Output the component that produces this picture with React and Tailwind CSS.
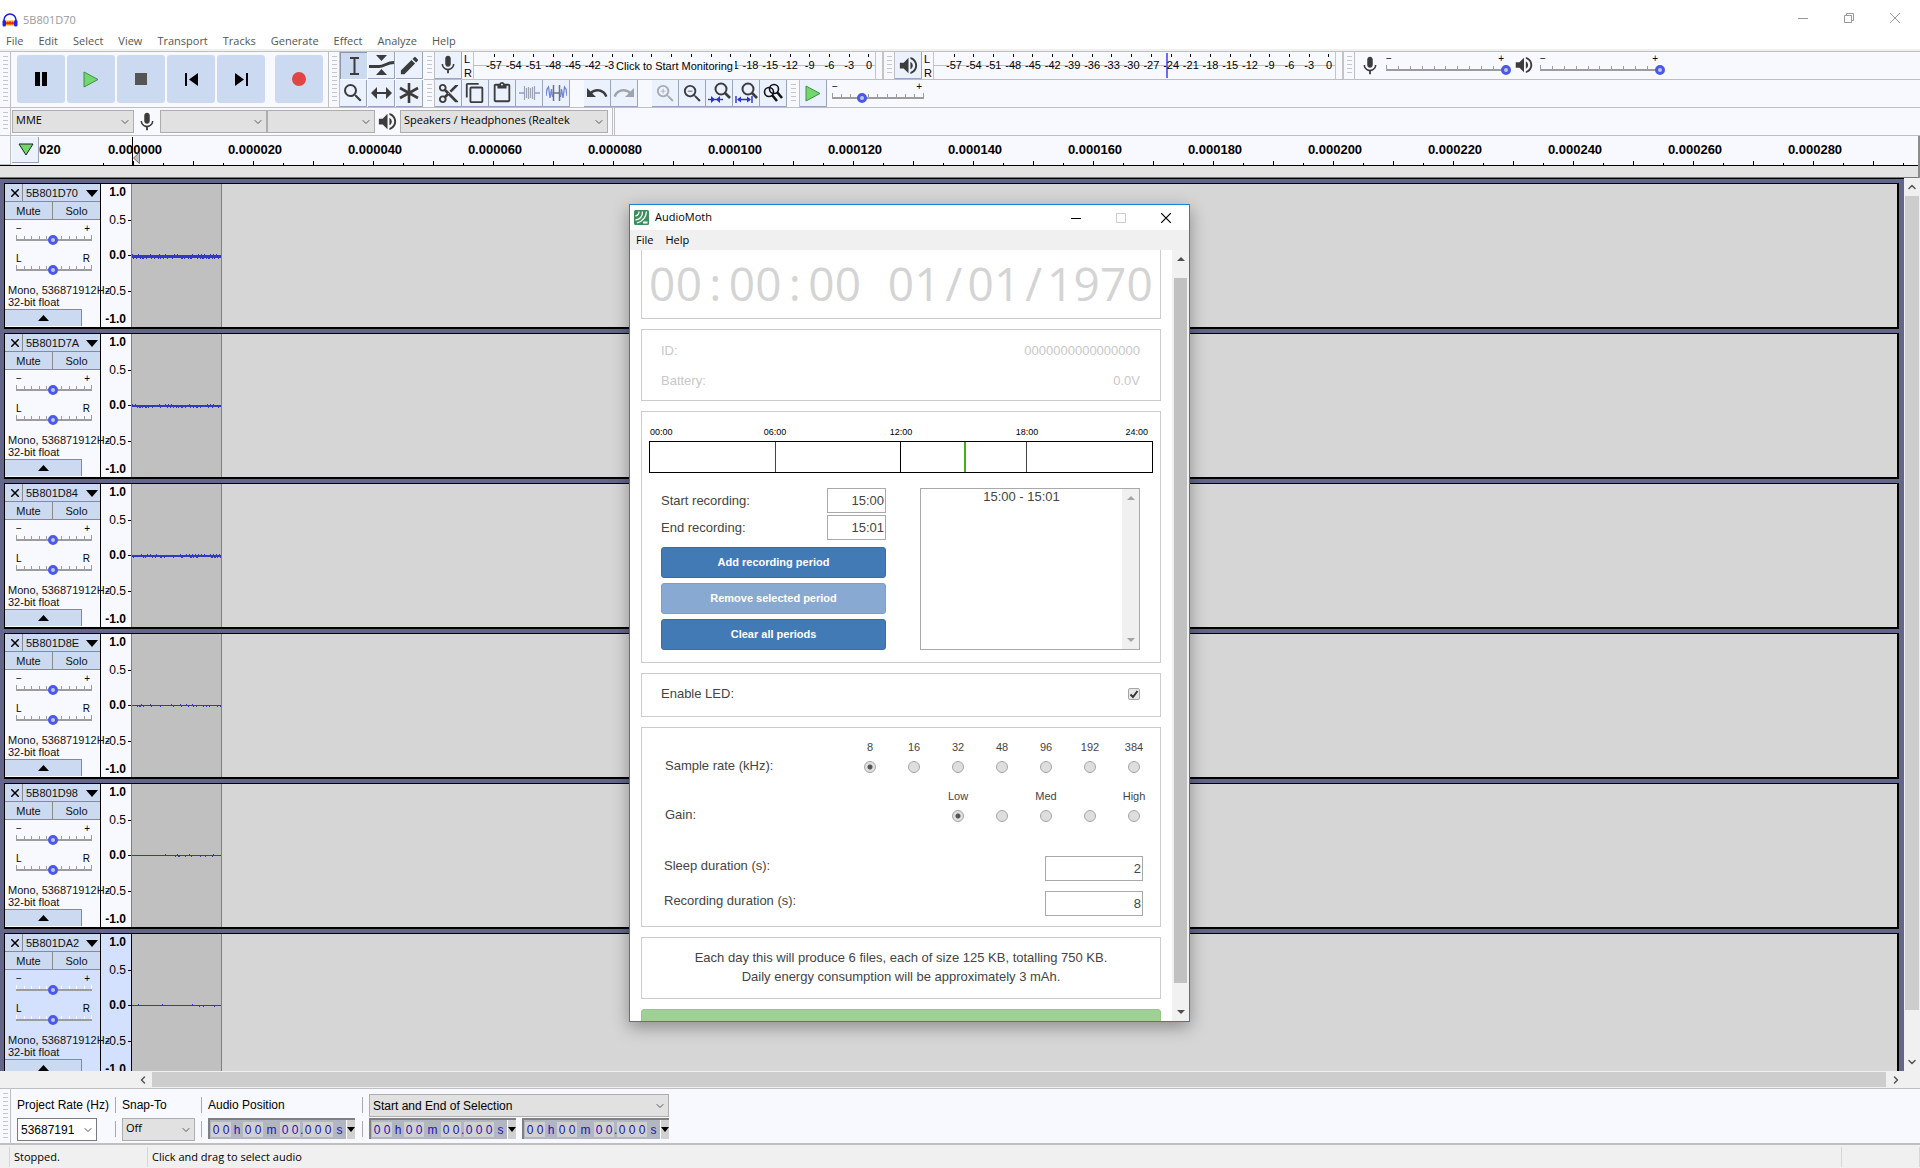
import { ChevronDown, ChevronLeft, ChevronRight, ChevronUp } from 'lucide-react'
import {
  MdContentCopy,
  MdContentCut,
  MdContentPaste,
  MdEdit,
  MdMic,
  MdRedo,
  MdSearch,
  MdUndo,
  MdVolumeUp,
  MdZoomIn,
  MdZoomOut,
} from 'react-icons/md'

const SYSTEM = "font-['Open_Sans','Noto_Sans',sans-serif]"
const ARIAL = "font-['Liberation_Sans',Arial,sans-serif]"

const MENUS = ['File', 'Edit', 'Select', 'View', 'Transport', 'Tracks', 'Generate', 'Effect', 'Analyze', 'Help']

const DB_MARKS = [-57, -54, -51, -48, -45, -42, -39, -36, -33, -30, -27, -24, -21, -18, -15, -12, -9, -6, -3, 0]

const TIME_LABELS = [
  '0.000000', '0.000020', '0.000040', '0.000060', '0.000080', '0.000100', '0.000120', '0.000140',
  '0.000160', '0.000180', '0.000200', '0.000220', '0.000240', '0.000260', '0.000280', '',
]

const TRACKS = [
  { name: '5B801D70', base: 3, noise: 1 },
  { name: '5B801D7A', base: 2, noise: 1 },
  { name: '5B801D84', base: 2, noise: 1 },
  { name: '5B801D8E', base: 1, noise: 0.6 },
  { name: '5B801D98', base: 1, noise: 0.3 },
  { name: '5B801DA2', base: 1, noise: 0.06, selected: true },
]

/* ---------- small shared pieces ---------- */

function Grip({ className = '' }) {
  return (
    <div className={`flex w-[11px] shrink-0 justify-center border-r border-[#bfbfbf] py-1 ${className}`}>
      <div className="w-[5px] bg-[repeating-linear-gradient(to_bottom,#c4c6cc_0,#c4c6cc_1px,transparent_1px,transparent_4px)]" />
    </div>
  )
}

function ToolButton({ label, active, children }) {
  return (
    <button
      aria-label={label}
      className={`flex h-[27px] w-[27px] shrink-0 items-center justify-center text-[#3c3c3c] ${
        active ? 'border-t border-l border-[#8d98ae] bg-[#cbd9f1]' : 'border-r border-b border-[#9aa5bb] bg-[#ebf2fe]'
      }`}
    >
      {children}
    </button>
  )
}

function Slider({ label, value, ticks = 10, minus, plus, light, className = '' }) {
  return (
    <div className={`shrink-0 ${className}`}>
      <div className={`flex justify-between pr-[2px] text-[10px] leading-[12px] text-black ${ARIAL}`}>
        <span>{minus}</span>
        <span>{plus}</span>
      </div>
      <div className="relative">
        <div className="flex h-1 items-end justify-between">
          {Array.from({ length: ticks + 1 }, (_, i) => (
            <span
              key={i}
              className={`w-px ${i === 0 || i === ticks ? 'h-1' : 'h-[3px]'} ${light ? 'bg-white' : 'bg-[#9c9c9c]'}`}
            />
          ))}
        </div>
        <div className="h-[2px] bg-[#9c9c9c]" />
        <input
          type="range"
          aria-label={label}
          defaultValue={value}
          className="absolute -inset-x-[5px] top-0 h-[10px] w-[calc(100%+10px)] appearance-none bg-transparent [&::-webkit-slider-thumb]:h-[10px] [&::-webkit-slider-thumb]:w-[10px] [&::-webkit-slider-thumb]:appearance-none [&::-webkit-slider-thumb]:rounded-full [&::-webkit-slider-thumb]:border-[3px] [&::-webkit-slider-thumb]:border-[#4a58ee] [&::-webkit-slider-thumb]:bg-[#c4c8d8]"
        />
      </div>
    </div>
  )
}

function Dropdown({ label, value, className = '', selectClass = 'border-[#adadad] bg-[#e1e1e1]', arial }) {
  return (
    <div className={`relative h-[23px] shrink-0 ${className}`}>
      <select
        aria-label={label}
        className={`block h-full w-full appearance-none border pr-5 pl-[3px] text-black ${arial ? `text-[12px] ${ARIAL}` : `pb-[2px] text-[11px] ${SYSTEM}`} ${selectClass}`}
      >
        <option>{value}</option>
      </select>
      <ChevronDown size={12} strokeWidth={2} className="pointer-events-none absolute top-[6px] right-[3px] text-[#555]" />
    </div>
  )
}

/* ---------- title and menus ---------- */

function AudacityLogo() {
  return (
    <svg viewBox="0 0 16 14" className="h-[14px] w-4">
      <path d="M4 7.500h8v5H4z" fill="#ffb300" />
      <path d="M4 9.500l1.500-1 1 1 1.500-1.500 1.500 1.500 1-1 1.500 1v1.500l-1.500.5-1.500-.5-1 1-1-1-1.500.5L4 11z" fill="#f22" />
      <path d="M2 9V7a6 6 0 0 1 12 0v2" fill="none" stroke="#2020d8" strokeWidth="1.600" />
      <rect x="0.500" y="7" width="3.500" height="6.500" rx="1.500" fill="#2323e6" />
      <rect x="12" y="7" width="3.500" height="6.500" rx="1.500" fill="#2323e6" />
    </svg>
  )
}

function TitleBar() {
  return (
    <header className="flex h-[31px] items-end bg-white pb-[3px] pl-[2px]">
      <div className="flex flex-1 items-center gap-[5px] text-[11px] leading-4 text-[#999]">
        <AudacityLogo />
        <span>5B801D70</span>
      </div>
      <div className="flex items-center gap-9 pr-5 pb-[5px] text-[#999]">
        <button aria-label="Minimize">
          <svg width="10" height="10"><path d="M0 5.500h10" stroke="currentColor" /></svg>
        </button>
        <button aria-label="Restore">
          <svg width="10" height="10" fill="none" stroke="currentColor"><path d="M.5 2.500h7v7h-7zM2.500 2.500v-2h7v7h-2" /></svg>
        </button>
        <button aria-label="Close">
          <svg width="10" height="10" stroke="currentColor"><path d="M0 0l10 10M10 0L0 10" /></svg>
        </button>
      </div>
    </header>
  )
}

function MenuBar() {
  return (
    <nav className="flex h-[20px] items-end gap-[15px] border-b-2 border-[#f0f0f0] bg-white pl-[6px] text-[11px] leading-4 text-[#555]">
      {MENUS.map((name) => (
        <button key={name}>{name}</button>
      ))}
    </nav>
  )
}

/* ---------- toolbars ---------- */

function BigButton({ label, className = '', children }) {
  return (
    <button aria-label={label} className={`flex h-12 w-12 items-center justify-center rounded-[3px] bg-[#cbd9f1] ${className}`}>
      {children}
    </button>
  )
}

function TransportBar() {
  return (
    <div className="flex shrink-0">
      <Grip />
      <div className="flex gap-[2px] border-r border-[#bfbfbf] pt-[3px] pr-[5px] pl-[6px]">
        <BigButton label="Pause">
          <svg width="12" height="14"><path d="M0 0h5v14H0zM7 0h5v14H7z" /></svg>
        </BigButton>
        <BigButton label="Play">
          <svg width="16" height="17"><path d="M1 1l14 7.500L1 16z" fill="#70d86c" stroke="#3f8f45" /></svg>
        </BigButton>
        <BigButton label="Stop">
          <svg width="12" height="12"><path d="M0 0h12v12H0z" fill="#555" /></svg>
        </BigButton>
        <BigButton label="Skip to Start">
          <svg width="13" height="13"><path d="M0 0h2v13H0zM13 0v13L4 6.500z" /></svg>
        </BigButton>
        <BigButton label="Skip to End">
          <svg width="13" height="13"><path d="M11 0h2v13h-2zM0 0v13l9-6.500z" /></svg>
        </BigButton>
        <BigButton label="Record" className="ml-2">
          <span className="h-[14px] w-[14px] rounded-full bg-[#e24444]" />
        </BigButton>
      </div>
    </div>
  )
}

function ToolsBar() {
  return (
    <div className="flex shrink-0">
      <Grip />
      <div className="grid grid-cols-3 gap-px pr-px">
        <ToolButton label="Selection Tool" active>
          <svg width="9" height="18" fill="none" stroke="currentColor" strokeWidth="2"><path d="M0 1h9M4.500 1v16M0 17h9" /></svg>
        </ToolButton>
        <ToolButton label="Envelope Tool">
          <svg width="25" height="20" viewBox="0 0 25 20">
            <path d="M7 0h11l-5.500 6zM7 20h11l-5.500-6z" fill="currentColor" />
            <path d="M0 11.500h10c5 0 8-4 15-4" fill="none" stroke="currentColor" strokeWidth="3" />
          </svg>
        </ToolButton>
        <ToolButton label="Draw Tool"><MdEdit size={23} /></ToolButton>
        <ToolButton label="Zoom Tool"><MdSearch size={24} /></ToolButton>
        <ToolButton label="Time Shift Tool">
          <svg width="21" height="12" viewBox="0 0 21 12">
            <path d="M0 6l6-6v12zM21 6l-6-6v12z" fill="currentColor" />
            <path d="M4 6h13" stroke="currentColor" strokeWidth="2" />
          </svg>
        </ToolButton>
        <ToolButton label="Multi-Tool">
          <svg width="20" height="20" viewBox="0 0 20 20" stroke="currentColor" strokeWidth="2.600">
            <path d="M10 0v20M1 5l18 10M19 5L1 15" />
          </svg>
        </ToolButton>
      </div>
    </div>
  )
}

function Meter({ level, covered = [], children }) {
  return (
    <>
      <div className={`flex w-[11px] flex-col pl-[2px] text-[11px] leading-[14px] text-black ${ARIAL}`}>
        <span>L</span>
        <span>R</span>
      </div>
      <div className="relative flex w-[403px] flex-col border-x border-[#c4c4c4]">
        <div className="absolute inset-x-0 top-[13px] h-px bg-[#bfbfbf]" />
        {level && <div className="absolute top-[1px] left-[232px] h-[25px] w-[2px] bg-[#6a6aff]" />}
        <div className={`relative flex justify-between pr-[6px] pl-5 text-[11px] leading-[15px] text-black ${ARIAL}`}>
          {DB_MARKS.map((db) => (
            <div key={db} className="flex w-0 flex-col items-center pt-[2px]">
              <span className="h-[3px] w-px bg-black" />
              <span className="pt-px">{covered.includes(db) ? null : db}</span>
            </div>
          ))}
        </div>
        {children}
      </div>
    </>
  )
}

function MeterRow() {
  return (
    <div className="flex h-[28px] border-b border-[#bfbfbf]">
      <Grip />
      <ToolButton label="Record Meter"><MdMic size={22} /></ToolButton>
      <Meter covered={[-36, -33, -30, -27, -24]}>
        <button
          className={`absolute top-[7px] left-[140px] w-[121px] bg-[#f8f9ff] text-center text-[11px] leading-[15px] whitespace-nowrap text-black ${ARIAL}`}
        >
          Click to Start Monitoring
        </button>
      </Meter>
      <div className="w-[8px] border-r-2 border-[#c4c4c4]" />
      <Grip />
      <ToolButton label="Playback Meter"><MdVolumeUp size={23} /></ToolButton>
      <Meter level />
      <div className="w-[8px] border-r-2 border-[#c4c4c4]" />
      <Grip />
      <div className="flex items-start gap-[5px] pl-1 text-[#3c3c3c]">
        <MdMic size={22} className="mt-[3px]" />
        <Slider label="Recording Volume" value={100} minus="−" plus="+" className="w-[120px] pt-px" />
        <MdVolumeUp size={22} className="mt-[2px] ml-[2px]" />
        <Slider label="Playback Volume" value={100} minus="−" plus="+" className="w-[120px] pt-px" />
      </div>
    </div>
  )
}

function WaveIcon({ silence }) {
  return (
    <svg width="21" height="16" viewBox="0 0 21 16" fill="none">
      {silence ? (
        <>
          <path d="M0 11l1-7 1.500-2L4 13l1.500-9 1 8M14.500 12l1-8L17 13l1.500-11L20 4l1 7" stroke="#6f86dc" strokeWidth="1.300" />
          <path d="M7.500 0v16M13.500 0v16M8 8h6" stroke="#6d7180" strokeWidth="1.500" />
        </>
      ) : (
        <>
          <path d="M0 8h5M16 8h5" stroke="#8b9ce0" strokeWidth="1.500" />
          <path d="M5.500 1v14M15.500 1v14M7.500 3v10M9.500 2v12M11.500 3v10M13.500 2v12" stroke="#9ea3b3" strokeWidth="1.200" />
        </>
      )}
    </svg>
  )
}

function ZoomMark({ fit }) {
  return (
    <svg width="23" height="22" viewBox="0 0 23 22" fill="none">
      <circle cx="13" cy="7" r="5.500" stroke="#3c3c3c" strokeWidth="2" />
      <path d="M17 11l5 5" stroke="#3c3c3c" strokeWidth="2.600" />
      {fit ? (
        <>
          <path d="M1 14v7M17 14v7M3 17.500h12" stroke="#2b32c8" strokeWidth="1.400" />
          <path d="M2 17.500l4-3v6zM16 17.500l-4-3v6z" fill="#2b32c8" />
        </>
      ) : (
        <>
          <path d="M0 17.500h15" stroke="#2b32c8" strokeWidth="1.400" />
          <path d="M7 17.500l-4-3.500v7zM8 17.500l4-3.500v7z" fill="#2b32c8" />
        </>
      )}
    </svg>
  )
}

function EditRow() {
  return (
    <div className="flex h-[27px]">
      <Grip />
      <ToolButton label="Cut"><MdContentCut size={23} /></ToolButton>
      <ToolButton label="Copy"><MdContentCopy size={22} /></ToolButton>
      <ToolButton label="Paste"><MdContentPaste size={22} /></ToolButton>
      <ToolButton label="Trim"><WaveIcon /></ToolButton>
      <ToolButton label="Silence"><WaveIcon silence /></ToolButton>
      <div className="w-[14px]" />
      <ToolButton label="Undo"><MdUndo size={24} /></ToolButton>
      <ToolButton label="Redo"><MdRedo size={24} className="text-[#a0a3aa]" /></ToolButton>
      <div className="w-[14px]" />
      <ToolButton label="Zoom In"><MdZoomIn size={23} className="text-[#a8abb2]" /></ToolButton>
      <ToolButton label="Zoom Out"><MdZoomOut size={23} /></ToolButton>
      <ToolButton label="Fit Selection"><ZoomMark /></ToolButton>
      <ToolButton label="Fit Project"><ZoomMark fit /></ToolButton>
      <ToolButton label="Zoom Toggle">
        <svg width="20" height="20" viewBox="0 0 20 20" fill="none" stroke="#111" strokeWidth="1.600">
          <circle cx="6" cy="9" r="4.500" />
          <circle cx="11" cy="6" r="4.500" />
          <path d="M9 12l5 6M14 9l5 6" strokeWidth="2.600" />
        </svg>
      </ToolButton>
      <Grip className="w-[13px]" />
      <ToolButton label="Play at Speed">
        <svg width="16" height="17"><path d="M1 1l14 7.500L1 16z" fill="#70d86c" stroke="#3f8f45" /></svg>
      </ToolButton>
      <Slider label="Playback Speed" value={33} minus="−" plus="+" className="ml-[5px] w-[92px] pt-px" />
    </div>
  )
}

function DeviceRow() {
  return (
    <div className="flex h-[28px] border-b border-[#bfbfbf]">
      <Grip />
      <div className="flex items-center pl-px text-[#3c3c3c]">
        <Dropdown label="Audio Host" value="MME" className="w-[122px]" />
        <MdMic size={22} className="mx-[2px]" />
        <Dropdown label="Recording Device" value="" className="w-[107px]" />
        <Dropdown label="Recording Channels" value="" className="w-[108px]" />
        <MdVolumeUp size={23} className="mx-px" />
        <Dropdown label="Playback Device" value="Speakers / Headphones (Realtek" className="w-[208px]" />
      </div>
      <div className="ml-1 w-[3px] border-x border-[#bfbfbf]" />
    </div>
  )
}

function Timeline() {
  return (
    <div className="border-r-2 border-[#8c8c8c]">
      <div className="relative flex h-[30px] overflow-hidden border-b border-black">
        <div className="w-[11px] shrink-0 border-r border-b border-[#bfbfbf]" />
        <button
          aria-label="Pinned Play Head"
          className="mt-px ml-px flex h-[26px] w-[27px] shrink-0 items-center justify-center border-r border-b border-[#9aa5bb] bg-[#ebf2fe] pl-px"
        >
          <svg width="16" height="13"><path d="M1 1h14L8 12z" fill="#70d86c" stroke="#222" /></svg>
        </button>
        <div className={`w-[36px] shrink-0 pt-[6px] text-[13px] leading-4 font-bold text-black ${ARIAL}`}>020</div>
        {TIME_LABELS.map((label, i) => (
          <div key={i} className={`flex w-[120px] shrink-0 flex-col justify-between pt-[6px] text-[13px] font-bold text-black ${ARIAL}`}>
            <span className="h-4 text-center leading-4">{label}</span>
            <div className="flex items-end">
              {[0, 1, 2, 3].map((n) => (
                <span key={n} className="flex w-[30px] justify-end pr-px">
                  <i className={`w-px bg-black ${n % 2 ? 'h-1' : 'h-[2px]'}`} />
                </span>
              ))}
            </div>
          </div>
        ))}
        <div className="absolute top-px bottom-0 left-[132px] w-px bg-black" />
        <svg className="absolute top-4 left-[133px]" width="7" height="12"><path d="M6.500 .5v11L.5 6z" fill="#c4c4c4" stroke="#777" /></svg>
      </div>
      <div className="h-[12px] border-b border-[#777] bg-[#e3e3e3]" />
    </div>
  )
}

/* ---------- tracks ---------- */

function Waveform({ base, noise, seed }) {
  let s = seed * 7919 + 17
  const bars = []
  for (let x = 0; x < 89; x++) {
    s = (s * 1103515245 + 12345) % 2147483648
    const extra = s / 2147483648 < noise * 0.5 ? 1 : 0
    bars.push(`M${x} ${4 - (extra && x % 3 === 0 ? 1 : 0)}h1v${base + extra}h-1z`)
  }
  return (
    <svg width="89" height="10" className="shrink-0">
      <path d={bars.join('')} fill="#3237c8" />
    </svg>
  )
}

function RulerMark({ children, bold, tick, className = '' }) {
  return (
    <div className={`flex h-4 items-center justify-end gap-[2px] text-[12px] leading-4 text-black ${bold ? 'font-bold' : ''} ${className}`}>
      <span className={tick ? '' : 'pr-[5px]'}>{children}</span>
      {tick && <i className="h-px w-[3px] bg-black" />}
    </div>
  )
}

function Track({ name, base, noise, selected, index }) {
  const tint = selected ? 'bg-[#d3e1ff]' : 'bg-[#f8f9ff]'
  return (
    <section className={`mb-1 flex h-[146px] shrink-0 border-t border-r-2 border-b-2 border-l border-black ${ARIAL}`}>
      <div className={`relative z-10 w-[96px] shrink-0 border-r border-black text-[11px] text-[#111] ${tint}`}>
        <div className="flex h-[18px] border-b border-[#8a8a8a] bg-[#cbd9f1]">
          <button aria-label="Close track" className="flex w-[18px] items-center justify-center border-r border-[#8a8a8a] pt-px pl-[2px]">
            <svg width="8" height="8" stroke="#000" strokeWidth="1.500"><path d="M0 0l8 8M8 0L0 8" /></svg>
          </button>
          <button className="flex flex-1 items-center justify-between pt-[2px] pr-[2px] pl-[3px]">
            {name}
            <svg width="12" height="7"><path d="M0 0h12L6 7z" /></svg>
          </button>
        </div>
        <div className="flex h-[18px] border-b border-[#8a8a8a] bg-[#cbd9f1]">
          <button className="w-[48px] border-r border-[#8a8a8a] pt-px">Mute</button>
          <button className="flex-1 pt-px">Solo</button>
        </div>
        <Slider label={`${name} gain`} value={49} minus="−" plus="+" light={selected} className="mt-[3px] ml-[11px] w-[76px]" />
        <Slider label={`${name} pan`} value={49} minus="L" plus="R" light={selected} className="mt-3 ml-[11px] w-[76px]" />
        <p className="mt-[13px] pl-[3px] leading-[12px] whitespace-nowrap">
          Mono, 536871912Hz
          <br />
          32-bit float
        </p>
        <button
          aria-label="Collapse track"
          className="mt-px flex h-[17px] w-[77px] items-center justify-center border-t border-r border-[#8a8a8a] bg-[#cbd9f1]"
        >
          <svg width="11" height="6"><path d="M0 6h11L5.500 0z" /></svg>
        </button>
      </div>
      <div className={`w-[30px] shrink-0 overflow-hidden ${tint}`}>
        <RulerMark bold>1.0</RulerMark>
        <RulerMark tick className="mt-3">0.5</RulerMark>
        <RulerMark bold tick className="mt-[19px]">0.0</RulerMark>
        <RulerMark tick className="mt-5">-0.5</RulerMark>
        <RulerMark bold className="mt-3">-1.0</RulerMark>
      </div>
      <div className={`flex shrink-0 items-center border-r border-l border-r-[#808080] bg-[#c0c0c0] ${selected ? 'border-l-black' : 'border-l-[#808080]'}`}>
        <Waveform base={base} noise={noise} seed={index + 1} />
      </div>
      <div className="flex-1 bg-[#d6d6d6]" />
    </section>
  )
}

function TrackArea() {
  return (
    <main className="flex min-h-0 flex-1 flex-col">
      <div className="flex min-h-0 flex-1">
        <div className="flex min-w-0 flex-1 flex-col overflow-hidden border-t border-black bg-[#636688] pt-1 pr-[5px] pl-1">
          {TRACKS.map((track, i) => (
            <Track key={track.name} index={i} {...track} />
          ))}
        </div>
        <div className="flex w-4 flex-col items-center bg-[#f0f0f0] text-[#555]">
          <ChevronUp size={12} strokeWidth={3} className="my-[3px]" />
          <div className="w-[14px] flex-1 bg-[#cdcdcd]" />
          <ChevronDown size={12} strokeWidth={3} className="mt-[46px] mb-[3px]" />
        </div>
      </div>
      <div className="flex h-[17px] items-center bg-[#f0f0f0] pr-[18px] pl-[137px] text-[#555]">
        <ChevronLeft size={12} strokeWidth={3} className="mr-[3px]" />
        <div className="h-[15px] flex-1 bg-[#cdcdcd]" />
        <ChevronRight size={12} strokeWidth={3} className="ml-1" />
      </div>
    </main>
  )
}

/* ---------- selection toolbar and status ---------- */

function Digits({ children }) {
  return (
    <span className="flex h-[15px] items-center bg-[#d0d0d0]">
      {children.split('').map((d, i) => (
        <span key={i} className="w-[10px] text-center">{d}</span>
      ))}
    </span>
  )
}

function TimeBox({ label }) {
  return (
    <div
      role="group"
      aria-label={label}
      className={`flex h-[21px] w-[147px] shrink-0 items-center border-t-2 border-l-2 border-[#808080] bg-[#b1b6c2] pl-px text-[12px] text-[#1f12b8] ${ARIAL}`}
    >
      <Digits>00</Digits>
      <span className="w-[12px] text-center">h</span>
      <Digits>00</Digits>
      <span className="w-[17px] text-center">m</span>
      <Digits>00</Digits>
      <span className="w-[3px]">.</span>
      <Digits>000</Digits>
      <span className="flex-1 text-center">s</span>
      <button aria-label={`${label} format`} className="flex h-full w-[9px] items-center justify-center border-l border-white bg-[#d0d0d0]">
        <svg width="8" height="5"><path d="M0 0h8L4 5z" /></svg>
      </button>
    </div>
  )
}

function Divider() {
  return (
    <div className="mx-[6px] flex w-px shrink-0 flex-col gap-2 pt-2">
      <span className="h-4 bg-[#a9a9a9]" />
      <span className="h-4 bg-[#a9a9a9]" />
    </div>
  )
}

function SelectionBar() {
  return (
    <div className={`flex h-[57px] border-t border-b-2 border-[#bfbfbf] bg-[#f8f9ff] text-[12px] whitespace-nowrap text-black ${ARIAL}`}>
      <Grip />
      <div className="ml-[6px] flex w-[92px] flex-col gap-[5px] pt-2">
        <span className="leading-4">Project Rate (Hz)</span>
        <Dropdown arial label="Project Rate" value="53687191" className="w-[80px]" selectClass="border-[#7a7a7a] bg-white" />
      </div>
      <Divider />
      <div className="flex w-[73px] flex-col gap-[5px] pt-2">
        <span className="leading-4">Snap-To</span>
        <Dropdown label="Snap-To" value="Off" />
      </div>
      <Divider />
      <div className="flex w-[148px] flex-col gap-[5px] pt-2">
        <span className="leading-4">Audio Position</span>
        <TimeBox label="Audio Position" />
      </div>
      <Divider />
      <div className="flex flex-col gap-[1px] pt-[5px]">
        <Dropdown arial label="Selection Mode" value="Start and End of Selection" />
        <div className="flex gap-[6px]">
          <TimeBox label="Selection Start" />
          <TimeBox label="Selection End" />
        </div>
      </div>
    </div>
  )
}

function StatusBar() {
  return (
    <footer className="flex h-[23px] items-center bg-[#f0f0f0] pl-[9px] text-[11px] leading-5 text-black">
      <span className="w-[138px] border-l border-[#d7d7d7] pl-1">Stopped.</span>
      <span className="flex-1 border-l border-[#d7d7d7] pl-1">Click and drag to select audio</span>
      <span className="h-5 w-[79px] border-x border-[#d7d7d7]" />
    </footer>
  )
}

/* ---------- AudioMoth window ---------- */

const RATES = ['8', '16', '32', '48', '96', '192', '384']
const GAINS = ['Low', '', 'Med', '', 'High']

function RadioRow({ title, name, options }) {
  return (
    <div role="radiogroup" aria-label={title} className="flex items-end pr-1 pl-[23px]">
      <span className="flex-1 leading-[14px]">{title}</span>
      {options.map((text, i) => (
        <label key={i} className="flex w-11 flex-col items-center gap-[6px] text-[11px] leading-4">
          <span className="h-4">{text}</span>
          <input
            type="radio"
            name={name}
            aria-label={text || `${title} ${i + 1}`}
            defaultChecked={i === 0}
            className="h-3 w-3 appearance-none rounded-full border border-[#a6a6a6] bg-[#dedede] checked:bg-[radial-gradient(circle,#555_0,#555_2px,#e0e0e0_3px)]"
          />
        </label>
      ))}
    </div>
  )
}

function TextField({ id, label, value, className, inputClass }) {
  return (
    <div className={`flex justify-between ${className}`}>
      <label htmlFor={id}>{label}</label>
      <input id={id} defaultValue={value} className={`h-[25px] border border-[#a9a9a9] bg-white pr-px text-right ${inputClass}`} />
    </div>
  )
}

function BlueButton({ children, faded }) {
  return (
    <button
      disabled={faded}
      className={`h-[31px] rounded-[3px] border pb-px text-[11px] font-bold text-white ${
        faded ? 'border-[#7c9fc9] bg-[#87a9d2]' : 'border-[#3a6da6] bg-[#427ab5]'
      }`}
    >
      {children}
    </button>
  )
}

function Card({ className = '', children }) {
  return <div className={`shrink-0 border border-[#ccc] ${className}`}>{children}</div>
}

function AudioMothWindow() {
  return (
    <div
      role="dialog"
      aria-label="AudioMoth"
      className="absolute top-[204px] left-[629px] z-20 flex h-[818px] w-[561px] flex-col border border-[#1883d7] bg-white shadow-[0_5px_16px_rgba(0,0,0,0.35)]"
    >
      <div className="flex h-[25px] shrink-0 items-center gap-[6px] pl-1 text-[12px] text-black">
        <svg width="15" height="15" viewBox="0 0 15 15">
          <rect width="15" height="15" rx="1.500" fill="#3a8f5c" />
          <path d="M1.500 6c2-.5 3.500-2 3.500-4.500M1.500 10c4-.5 7-3.500 7-8.500M3 13c5-1.500 9-5.500 9.500-11.500" fill="none" stroke="#fff" strokeWidth="1.300" />
          <path d="M9 11.500h4.500v2H9z" fill="#fff" />
        </svg>
        <span className="flex-1 text-[11px]">AudioMoth</span>
        <div className="flex gap-[35px] pr-[18px]">
          <button aria-label="Minimize window">
            <svg width="10" height="10"><path d="M0 5.500h10" stroke="#000" /></svg>
          </button>
          <button aria-label="Maximize window" disabled>
            <svg width="10" height="10" fill="none"><path d="M.5 .5h9v9h-9z" stroke="#ccc" /></svg>
          </button>
          <button aria-label="Close window">
            <svg width="10" height="10" stroke="#000" strokeWidth="1.200"><path d="M0 0l10 10M10 0L0 10" /></svg>
          </button>
        </div>
      </div>
      <div className="flex h-5 shrink-0 items-center gap-3 bg-[#f0f0f0] pl-[6px] text-[11px] text-black">
        <button>File</button>
        <button>Help</button>
      </div>

      <div className="flex min-h-0 flex-1">
        <div className={`flex min-w-0 flex-1 flex-col gap-[10px] overflow-hidden px-[11px] text-[13px] text-[#444] ${ARIAL}`}>
          <div className="grid h-[69px] shrink-0 grid-cols-[repeat(19,minmax(0,1fr))] border-x border-b border-[#ccc] px-[7px] font-['Open_Sans','Noto_Sans',sans-serif] text-[46px] leading-[67px] font-medium text-[#d4d4d4]">
            {'00:00:00 01/01/1970'.split('').map((c, i) => (
              <span key={i} className="text-center">{c}</span>
            ))}
          </div>

          <Card className="flex h-[72px] flex-col justify-center gap-[11px] px-5 pl-[19px] leading-[19px] text-[#c8c8c8]">
            <div className="flex justify-between"><span>ID:</span><span>0000000000000000</span></div>
            <div className="flex justify-between"><span>Battery:</span><span>0.0V</span></div>
          </Card>

          <Card className="pt-[14px] pb-[12px]">
            <div className="mx-[7px]">
              <div className="flex text-[9px] leading-[12px] text-black">
                <span className="w-[12.5%] pl-px">00:00</span>
                <span className="w-1/4 text-center">06:00</span>
                <span className="w-1/4 text-center">12:00</span>
                <span className="w-1/4 text-center">18:00</span>
                <span className="w-[12.5%] pr-[5px] text-right">24:00</span>
              </div>
              <div className="relative mt-[3px] grid h-8 grid-cols-4 border border-black">
                <span className="border-r border-[#444]" />
                <span className="border-r border-black" />
                <span className="border-r border-[#444]" />
                <span className="absolute inset-y-0 left-[62.5%] w-[2px] bg-[#3fb315]" />
              </div>
            </div>
            <div className="mt-[15px] flex justify-between pr-5 pl-[19px]">
              <div className="flex w-[225px] flex-col">
                <TextField id="start" label="Start recording:" value="15:00" className="items-center" inputClass="w-[59px]" />
                <TextField id="end" label="End recording:" value="15:01" className="mt-[2px] items-center" inputClass="w-[59px]" />
                <div className="mt-[7px] flex flex-col gap-[5px]">
                  <BlueButton>Add recording period</BlueButton>
                  <BlueButton faded>Remove selected period</BlueButton>
                  <BlueButton>Clear all periods</BlueButton>
                </div>
              </div>
              <div className="flex w-[220px] border border-[#a9a9a9]">
                <ul role="listbox" aria-label="Recording periods" className="flex-1 text-center leading-4">
                  <li role="option" aria-selected="false">15:00 - 15:01</li>
                </ul>
                <div className="flex w-[17px] flex-col items-center justify-between bg-[#f0f0f0] py-[7px]">
                  <svg width="8" height="4"><path d="M0 4h8L4 0z" fill="#a3a3a3" /></svg>
                  <svg width="8" height="4"><path d="M0 0h8L4 4z" fill="#a3a3a3" /></svg>
                </div>
              </div>
            </div>
          </Card>

          <Card className="flex h-11 items-center justify-between pr-5 pb-[3px] pl-[19px]">
            <label htmlFor="led">Enable LED:</label>
            <span className="relative flex">
              <input id="led" type="checkbox" defaultChecked className="h-3 w-3 appearance-none rounded-[2px] border border-[#a6a6a6] bg-[#e6e6e6]" />
              <svg width="12" height="12" className="pointer-events-none absolute inset-0" fill="none" stroke="#333" strokeWidth="2"><path d="M2.500 6.500l2.500 2.500L9.500 3" /></svg>
            </span>
          </Card>

          <Card className="pt-[11px] pb-[10px]">
            <RadioRow title="Sample rate (kHz):" name="rate" options={RATES} />
            <div className="h-[15px]" />
            <RadioRow title="Gain:" name="gain" options={GAINS} />
            <TextField id="sleep" label="Sleep duration (s):" value="2" className="mt-[34px] pr-[17px] pl-[22px]" inputClass="w-[98px]" />
            <TextField id="duration" label="Recording duration (s):" value="8" className="mt-[10px] pr-[17px] pl-[22px]" inputClass="w-[98px]" />
          </Card>

          <Card className="h-[62px] pt-[10px] text-center leading-[19px]">
            Each day this will produce 6 files, each of size 125 KB, totalling 750 KB.
            <br />
            Daily energy consumption will be approximately 3 mAh.
          </Card>

          <button aria-label="Configure AudioMoth" className="h-8 shrink-0 rounded-[3px] border border-[#93c78b] bg-[#9fd096]" />
        </div>

        <div className="flex w-[17px] flex-col items-center bg-[#f1f1f1]">
          <svg width="8" height="4" className="mt-[7px] mb-[17px]"><path d="M0 4h8L4 0z" fill="#505050" /></svg>
          <div className="w-[13px] flex-1 bg-[#c1c1c1]" />
          <svg width="8" height="4" className="mt-[27px] mb-[7px]"><path d="M0 0h8L4 4z" fill="#505050" /></svg>
        </div>
      </div>
    </div>
  )
}

export default function App() {
  return (
    <div className={`relative flex h-screen flex-col overflow-hidden bg-[#f8f9ff] ${SYSTEM}`}>
      <TitleBar />
      <MenuBar />
      <div className="flex h-[57px] shrink-0 border-y border-[#bfbfbf]">
        <TransportBar />
        <ToolsBar />
        <div className="min-w-0 flex-1 overflow-hidden">
          <MeterRow />
          <EditRow />
        </div>
      </div>
      <DeviceRow />
      <Timeline />
      <TrackArea />
      <SelectionBar />
      <StatusBar />
      <AudioMothWindow />
    </div>
  )
}
